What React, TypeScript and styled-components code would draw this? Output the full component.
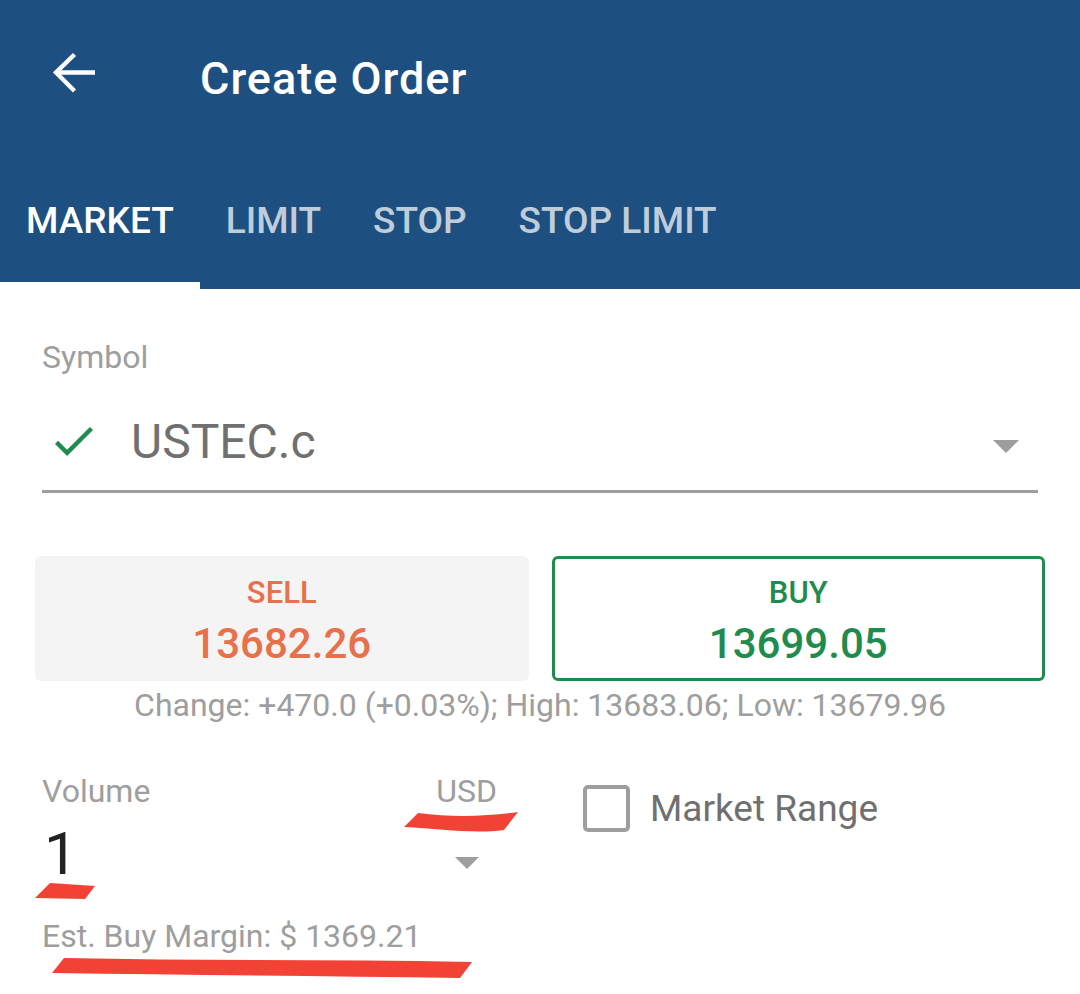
import React from "react";
import styled, { createGlobalStyle } from "styled-components";

const GlobalStyle = createGlobalStyle`
  html, body {
    margin: 0;
    padding: 0;
    background: #ffffff;
  }
  body {
    font-family: Roboto, "Noto Sans", "Liberation Sans", sans-serif;
  }
  * {
    box-sizing: border-box;
  }
`;

const palette = {
  blue: "#1d5080",
  label: "#9e9e9e",
  text: "#707070",
  dark: "#222222",
  green: "#1e8c4e",
  orange: "#e8704a",
  panel: "#f4f4f4",
  marker: "#f24236",
};

const Screen = styled.div`
  position: relative;
  width: 1080px;
  height: 994px;
  overflow: hidden;
  background: #ffffff;
`;

const Header = styled.header`
  background: ${palette.blue};
  color: #ffffff;
`;

const Toolbar = styled.div`
  height: 150px;
  display: flex;
  align-items: center;
  padding-left: 53px;
`;

const BackButton = styled.button`
  display: flex;
  align-items: center;
  justify-content: center;
  width: 42px;
  height: 42px;
  padding: 0;
  border: 0;
  background: transparent;
  margin-bottom: 4px;
`;

const Title = styled.h1`
  margin: 6px 0 0 105px;
  font-size: 45px;
  font-weight: 500;
  letter-spacing: 1px;
  line-height: normal;
`;

const TabBar = styled.nav`
  display: flex;
  height: 139px;
`;

const Tab = styled.div<{ $active?: boolean }>`
  display: flex;
  align-items: center;
  padding: 8px 26px 0;
  font-size: 37px;
  font-weight: 500;
  color: ${(p) => (p.$active ? "#ffffff" : "rgba(255, 255, 255, 0.74)")};
  border-bottom: 7px solid ${(p) => (p.$active ? "#ffffff" : "transparent")};
`;

const Body = styled.main`
  padding: 0 42px;
`;

const FieldLabel = styled.div`
  font-size: 32px;
  color: ${palette.label};
  line-height: normal;
`;

const SymbolLabel = styled(FieldLabel)`
  margin-top: 49px;
`;

const SymbolField = styled.div`
  display: flex;
  align-items: center;
  margin-top: 37px;
  padding-bottom: 20px;
  border-bottom: 3px solid ${palette.label};
`;

const CheckIcon = styled.svg`
  width: 38px;
  height: 29px;
  margin: 0 38px 0 13px;
  fill: ${palette.green};
`;

const SymbolValue = styled.span`
  flex: 1;
  font-size: 48px;
  color: ${palette.text};
  line-height: normal;
`;

const Caret = styled.span<{ $size: number }>`
  width: 0;
  height: 0;
  border-left: ${(p) => p.$size}px solid transparent;
  border-right: ${(p) => p.$size}px solid transparent;
  border-top: ${(p) => p.$size}px solid ${palette.label};
`;

const SymbolCaret = styled(Caret)`
  margin: 10px 19px 0 0;
`;

const QuoteRow = styled.div`
  display: grid;
  grid-template-columns: 1fr 1fr;
  gap: 23px;
  margin: 63px -7px 0;
`;

const QuoteCard = styled.div<{ $side: "sell" | "buy" }>`
  height: 125px;
  display: flex;
  flex-direction: column;
  align-items: center;
  gap: 8px;
  border-radius: 6px;
  padding-top: ${(p) => (p.$side === "buy" ? 15 : 18)}px;
  color: ${(p) => (p.$side === "buy" ? palette.green : palette.orange)};
  background: ${(p) => (p.$side === "buy" ? "#ffffff" : palette.panel)};
  border: ${(p) => (p.$side === "buy" ? `3px solid ${palette.green}` : "none")};
`;

const QuoteSide = styled.span`
  font-size: 31px;
  font-weight: 500;
  line-height: normal;
`;

const QuotePrice = styled.span`
  font-size: 42px;
  font-weight: 500;
  line-height: normal;
`;

const Stats = styled.div`
  margin-top: 5px;
  text-align: center;
  font-size: 32px;
  color: ${palette.label};
  line-height: normal;
`;

const OrderRow = styled.div`
  display: flex;
  align-items: flex-start;
  margin-top: 48px;
`;

const VolumeColumn = styled.div`
  width: 455px;
`;

const LabelRow = styled.div`
  display: flex;
  justify-content: space-between;
`;

const ValueRow = styled.div`
  display: flex;
  justify-content: space-between;
  align-items: center;
  margin-top: 8px;
`;

const VolumeValue = styled.span`
  padding-left: 2px;
  font-size: 60px;
  color: ${palette.dark};
  line-height: normal;
`;

const VolumeCaret = styled(Caret)`
  margin: 18px 18px 0 0;
`;

const Margin = styled(FieldLabel)`
  margin-top: 28px;
`;

const RangeOption = styled.label`
  display: flex;
  align-items: center;
  gap: 20px;
  margin: 13px 0 0 86px;
  font-size: 37px;
  color: ${palette.text};
  line-height: normal;
`;

const CheckBox = styled.span`
  width: 47px;
  height: 47px;
  border: 4px solid ${palette.label};
  border-radius: 5px;
`;

const Annotations = styled.svg`
  position: absolute;
  inset: 0;
  width: 1080px;
  height: 994px;
  pointer-events: none;
  fill: ${palette.marker};
`;

const tabs = ["MARKET", "LIMIT", "STOP", "STOP LIMIT"];

export default function App() {
  return (
    <Screen>
      <GlobalStyle />
      <Header>
        <Toolbar>
          <BackButton aria-label="Back">
            <svg width="42" height="42" viewBox="0 0 42 42" fill="none">
              <path
                d="M42 20.5H4 M21.5 2.5L3 20.5l18.5 18.5"
                stroke="#ffffff"
                strokeWidth="4.4"
              />
            </svg>
          </BackButton>
          <Title>Create Order</Title>
        </Toolbar>
        <TabBar>
          {tabs.map((tab, index) => (
            <Tab key={tab} $active={index === 0}>
              {tab}
            </Tab>
          ))}
        </TabBar>
      </Header>

      <Body>
        <SymbolLabel>Symbol</SymbolLabel>
        <SymbolField>
          <CheckIcon viewBox="3.4 5.6 17.6 13.4">
            <path d="M9 16.17L4.83 12l-1.42 1.41L9 19 21 7l-1.41-1.41z" />
          </CheckIcon>
          <SymbolValue>USTEC.c</SymbolValue>
          <SymbolCaret $size={13} />
        </SymbolField>

        <QuoteRow>
          <QuoteCard $side="sell">
            <QuoteSide>SELL</QuoteSide>
            <QuotePrice>13682.26</QuotePrice>
          </QuoteCard>
          <QuoteCard $side="buy">
            <QuoteSide>BUY</QuoteSide>
            <QuotePrice>13699.05</QuotePrice>
          </QuoteCard>
        </QuoteRow>
        <Stats>Change: +470.0 (+0.03%); High: 13683.06; Low: 13679.96</Stats>

        <OrderRow>
          <VolumeColumn>
            <LabelRow>
              <FieldLabel>Volume</FieldLabel>
              <FieldLabel>USD</FieldLabel>
            </LabelRow>
            <ValueRow>
              <VolumeValue>1</VolumeValue>
              <VolumeCaret $size={12} />
            </ValueRow>
            <Margin>Est. Buy Margin: $ 1369.21</Margin>
          </VolumeColumn>
          <RangeOption>
            <CheckBox />
            Market Range
          </RangeOption>
        </OrderRow>
      </Body>

      <Annotations viewBox="0 0 1080 994">
        <path d="M418 813C455 818 490 816 518 812L504 830C475 834 440 829 404 827Z" />
        <path d="M50 883L95 886L85 899L35 898Z" />
        <path d="M64 958C200 961 340 959 472 962L460 978C330 976 190 975 52 973Z" />
      </Annotations>
    </Screen>
  );
}
